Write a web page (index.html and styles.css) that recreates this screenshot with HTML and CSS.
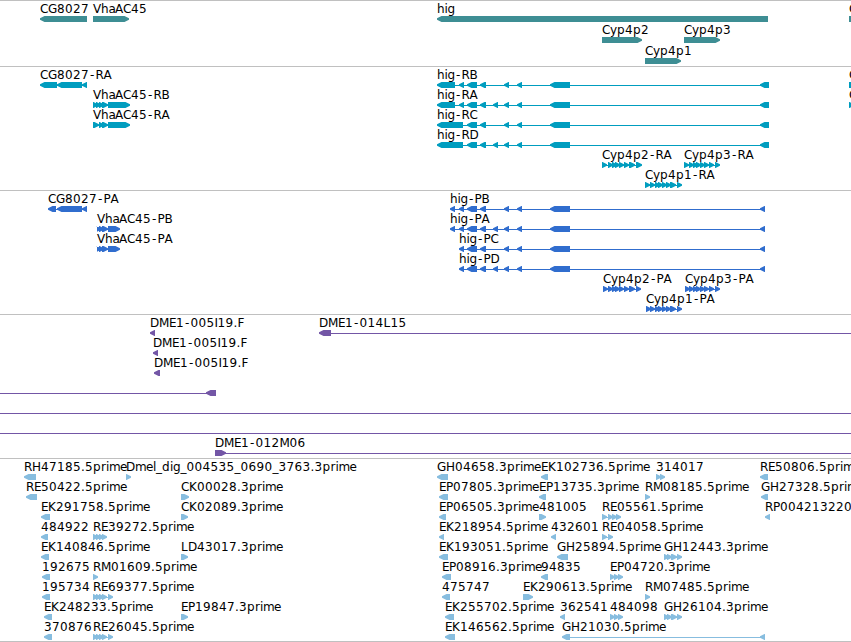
FILE: index.html
```html
<!DOCTYPE html>
<html lang="en">
<head>
  <meta charset="UTF-8">
  <title>Genome browser</title>
  <link rel="stylesheet" href="styles.css">
</head>
<body>

  <main class="browser">
    <section class="track genes" id="genes"></section>
    <section class="track transcripts" id="transcripts"></section>
    <section class="track proteins" id="proteins"></section>
    <section class="track clones" id="clones"></section>
    <section class="track ests" id="ests"></section>
  </main>

  <script src="tracks.js"></script>
</body>
</html>
```

FILE: styles.css
```css
body {
  margin: 0;
  background-color: #ffffff;
  overflow: hidden;
}
.browser {
  display: flex;
  flex-direction: column;
  border-bottom: 1px solid #c0c0c0;
}
.track {
  box-sizing: border-box;
  border-top: 1px solid #c0c0c0;
  overflow: hidden;
}
.track svg {
  display: block;
  width: 100%;
  height: 100%;
}
.track text {
  font-family: "DejaVu Sans", sans-serif;
  font-size: 12px;
  fill: #000000;
}
.genes {
  height: 66px;
  color: #3e8e94;
}
.transcripts {
  height: 124px;
  color: #009dbf;
}
.proteins {
  height: 124px;
  color: #306dce;
}
.clones {
  height: 144px;
  color: #7356a6;
}
.ests {
  height: 183px;
  color: #87bddf;
}
.shape {
  fill: currentColor;
}
.intron {
  fill: currentColor;
  shape-rendering: crispEdges;
}
```

FILE: tracks.js
```js
const SVG = "http://www.w3.org/2000/svg";

// label advances in pixels, digits are 8
const ADVANCE = {
  C: 8, G: 9, V: 8, A: 8, R: 8, B: 7, D: 9, P: 7, H: 9, E: 7, K: 8, L: 7, M: 10, I: 3, F: 7,
  h: 7.5, a: 6.5, i: 3, g: 7.5, y: 7, p: 8, r: 5, m: 11, e: 7, l: 3, d: 8,
  ".": 4, "-": 6.5, "_": 6
};

// [row, direction, label, parts]
const genes = [
  [0, "<", "CG8027", [[40, 87]]],
  [0, ">", "VhaAC45", [[93, 129]]],
  [0, "<", "hig", [[437, 768]]],
  [0, "-", "C", [[849, 870]]],
  [1, ">", "Cyp4p2", [[602, 642]]],
  [1, ">", "Cyp4p3", [[684, 720]]],
  [2, ">", "Cyp4p1", [[645, 681]]]
];

const transcripts = [
  [0, "<", "CG8027-RA", [[40, 57], [57, 82], [82, 87]]],
  [1, ">", "VhaAC45-RB", [[93, 98], [96, 101], [99, 104], [102, 108], [108, 130]]],
  [2, ">", "VhaAC45-RA", [[93, 99], [99, 104], [102, 108], [108, 130]]],
  [0, "<", "hig-RB", [[437, 455], [459, 464], [467, 477], [480, 486], [504, 509], [517, 522], [550, 570], [760, 769]]],
  [1, "<", "hig-RA", [[437, 455], [459, 464], [467, 477], [480, 486], [493, 498], [504, 509], [517, 522], [550, 570], [760, 769]]],
  [2, "<", "hig-RC", [[437, 463], [467, 477], [480, 486], [504, 509], [517, 522], [550, 570], [760, 769]]],
  [3, "<", "hig-RD", [[437, 463], [467, 477], [480, 486], [493, 498], [504, 509], [517, 522], [550, 570], [760, 769]]],
  [4, ">", "Cyp4p2-RA", [[602, 607], [608, 613], [612, 617], [615, 620], [619, 624], [624, 629], [629, 635], [636, 642]]],
  [4, ">", "Cyp4p3-RA", [[684, 689], [689, 694], [693, 698], [696, 701], [700, 705], [704, 709], [709, 714], [715, 720]]],
  [5, ">", "Cyp4p1-RA", [[645, 650], [650, 655], [655, 660], [658, 663], [662, 667], [666, 671], [670, 676], [677, 682]]],
  [0, "-", "C", [[849, 870]]],
  [1, ">", "C", [[849, 854]]]
];

const proteins = [
  [0, "<", "CG8027-PA", [[48, 56], [57, 82], [82, 87]]],
  [1, ">", "VhaAC45-PB", [[97, 101], [99, 104], [102, 108], [108, 120]]],
  [2, ">", "VhaAC45-PA", [[97, 101], [99, 104], [102, 108], [108, 120]]],
  [0, "<", "hig-PB", [[450, 455], [459, 464], [467, 477], [480, 486], [504, 509], [517, 522], [550, 570], [760, 765]]],
  [1, "<", "hig-PA", [[450, 455], [459, 464], [467, 477], [480, 486], [493, 498], [504, 509], [517, 522], [550, 570], [760, 765]]],
  [2, "<", "hig-PC", [[459, 464], [467, 477], [480, 486], [504, 509], [517, 522], [550, 570], [760, 765]]],
  [3, "<", "hig-PD", [[459, 464], [467, 477], [480, 486], [493, 498], [504, 509], [517, 522], [550, 570], [760, 765]]],
  [4, ">", "Cyp4p2-PA", [[603, 608], [608, 613], [612, 617], [615, 620], [619, 624], [624, 629], [629, 635], [636, 641]]],
  [4, ">", "Cyp4p3-PA", [[685, 690], [689, 694], [693, 698], [696, 701], [700, 705], [704, 709], [709, 714], [715, 720]]],
  [5, ">", "Cyp4p1-PA", [[646, 651], [650, 655], [655, 660], [658, 663], [662, 667], [666, 671], [670, 676], [677, 682]]]
];

const clones = [
  [0, "<", "DME1-005I19.F", [[150, 155]]],
  [1, "<", "DME1-005I19.F", [[153, 158]]],
  [2, "<", "DME1-005I19.F", [[154, 160]]],
  [0, "<", "DME1-014L15", [[319, 331], [900, 910]]],
  [3, "<", "", [[-20, -10], [206, 216]]],
  [4, "<", "", [[-20, -10], [900, 910]]],
  [5, "<", "", [[-20, -10], [900, 910]]],
  [6, ">", "DME1-012M06", [[215, 226], [900, 910]]]
];

const ests = [
  [0, "<", "RH47185.5prime", [[24, 36]]],
  [0, ">", "Dmel_dig_004535_0690_3763.3prime", [[126, 131]]],
  [0, "<", "GH04658.3prime", [[437, 448]]],
  [0, "<", "EK102736.5prime", [[541, 548]]],
  [0, ">", "314017", [[656, 661], [660, 665]]],
  [0, "<", "RE50806.5prime", [[760, 768]]],

  [1, "<", "RE50422.5prime", [[26, 37]]],
  [1, ">", "CK00028.3prime", [[181, 189]]],
  [1, "<", "EP07805.3prime", [[439, 448]]],
  [1, "<", "EP13735.3prime", [[539, 546]]],
  [1, ">", "RM08185.5prime", [[645, 650]]],
  [1, "<", "GH27328.5prime", [[761, 768]]],

  [2, "<", "EK291758.5prime", [[41, 50]]],
  [2, ">", "CK02089.3prime", [[181, 188]]],
  [2, "<", "EP06505.3prime", [[439, 446]]],
  [2, ">", "481005", [[539, 546]]],
  [2, ">", "RE05561.5prime", [[602, 607], [608, 613], [612, 617], [616, 621]]],
  [2, "<", "RP004213220", [[765, 770]]],

  [3, "<", "484922", [[41, 48]]],
  [3, ">", "RE39272.5prime", [[93, 98], [96, 101], [99, 104], [102, 107]]],
  [3, "<", "EK218954.5prime", [[439, 444]]],
  [3, "<", "432601", [[551, 556]]],
  [3, ">", "RE04058.5prime", [[602, 607], [608, 613]]],

  [4, "<", "EK140846.5prime", [[41, 49]]],
  [4, ">", "LD43017.3prime", [[181, 188]]],
  [4, "<", "EK193051.5prime", [[439, 448]]],
  [4, "<", "GH25894.5prime", [[557, 568]]],
  [4, ">", "GH12443.3prime", [[664, 669], [667, 672], [671, 677], [677, 682]]],

  [5, "<", "192675", [[42, 50]]],
  [5, ">", "RM01609.5prime", [[93, 98]]],
  [5, "<", "EP08916.3prime", [[442, 451]]],
  [5, "<", "94835", [[541, 548]]],
  [5, ">", "EP04720.3prime", [[610, 615], [614, 619], [618, 623]]],

  [6, "<", "195734", [[42, 50]]],
  [6, ">", "RE69377.5prime", [[93, 98], [96, 101], [99, 104], [102, 107], [108, 113]]],
  [6, "<", "475747", [[442, 450]]],
  [6, ">", "EK290613.5prime", [[523, 533]]],
  [6, ">", "RM07485.5prime", [[645, 650]]],

  [7, "<", "EK248233.5prime", [[44, 52]]],
  [7, ">", "EP19847.3prime", [[181, 188]]],
  [7, "<", "EK255702.5prime", [[445, 454]]],
  [7, "<", "362541", [[560, 565]]],
  [7, ">", "484098", [[610, 615], [614, 619], [618, 623]]],
  [7, ">", "GH26104.3prime", [[664, 669], [667, 672], [671, 677], [677, 682]]],

  [8, "<", "370876", [[44, 52]]],
  [8, ">", "RE26045.5prime", [[93, 98], [96, 101], [99, 104], [102, 107], [108, 113]]],
  [8, "<", "EK146562.5prime", [[445, 455]]],
  [8, "<", "GH21030.5prime", [[562, 570], [760, 765]]]
];

function add(parent, name, attrs) {
  const el = document.createElementNS(SVG, name);
  for (const key in attrs) el.setAttribute(key, attrs[key]);
  parent.appendChild(el);
  return el;
}

// bars are 6px high, the head is 5px long with a blunt tip
function arrow(dir, s, e, y) {
  if (dir === "<") {
    return `${s},${y + 2.3} ${s + 4.5},${y} ${e},${y} ${e},${y + 6} ${s + 4.5},${y + 6} ${s},${y + 3.7}`;
  }
  if (dir === ">") {
    return `${s},${y} ${e - 4.5},${y} ${e},${y + 2.3} ${e},${y + 3.7} ${e - 4.5},${y + 6} ${s},${y + 6}`;
  }
  return `${s},${y} ${e},${y} ${e},${y + 6} ${s},${y + 6}`;
}

function drawTrack(id, features, pitch) {
  const svg = add(document.getElementById(id), "svg", {});
  features.forEach(([row, dir, label, parts]) => {
    const top = row * pitch;
    const start = parts[0][0];
    const end = parts[parts.length - 1][1];

    if (parts.length > 1) {
      add(svg, "rect", { class: "intron", x: start + 2, y: top + 18, width: end - start - 4, height: 1 });
    }
    parts.forEach(([s, e]) => {
      add(svg, "polygon", { class: "shape", points: arrow(dir, s, e, top + 15) });
    });

    if (label) {
      let x = start;
      const xs = [...label].map(ch => {
        // the hyphen is narrow, so centre it in its cell
        const at = ch === "-" ? x + 1 : x;
        x += ADVANCE[ch] || 8;
        return at;
      });
      add(svg, "text", { x: xs.join(" "), y: top + 12 }).textContent = label;
    }
  });
}

drawTrack("genes", genes, 21);
drawTrack("transcripts", transcripts, 20);
drawTrack("proteins", proteins, 20);
drawTrack("clones", clones, 20);
drawTrack("ests", ests, 20);
```
